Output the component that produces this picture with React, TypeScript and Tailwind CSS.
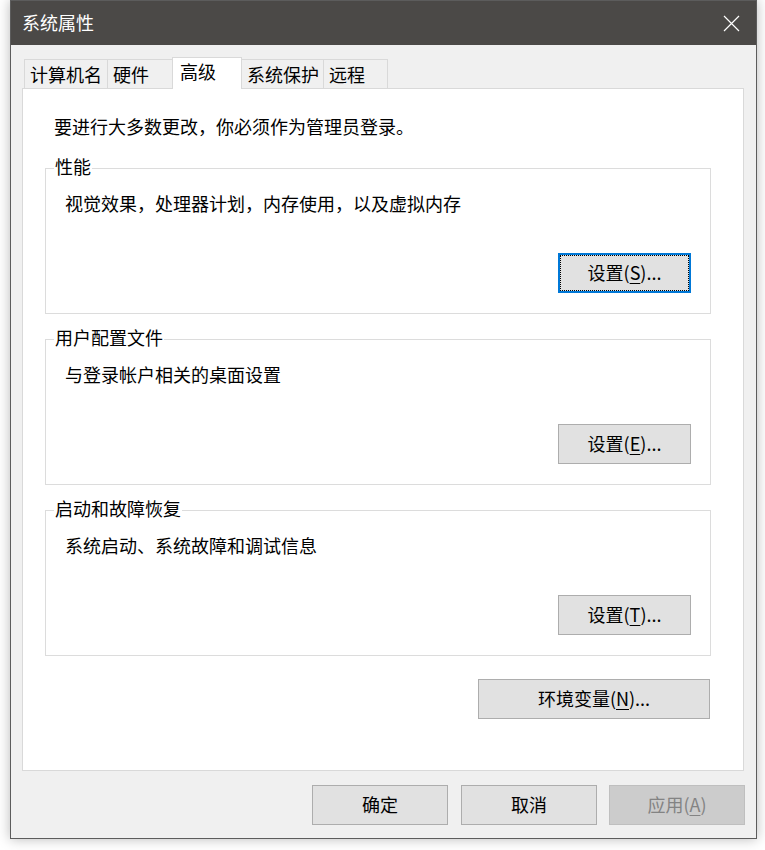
import React from "react";

const font = "font-['Noto_Sans_CJK_SC','Noto_Sans',sans-serif]";

interface TabItem {
  label: string;
  width: string;
  selected?: boolean;
  after?: boolean;
}

const tabs: TabItem[] = [
  { label: "计算机名", width: "w-[83px]" },
  { label: "硬件", width: "w-[65px]" },
  { label: "高级", width: "w-[70px]", selected: true },
  { label: "系统保护", width: "w-[82px]", after: true },
  { label: "远程", width: "w-[64px]", after: true },
];

function Mnemonic({ text, letter, rest }: { text: string; letter: string; rest: string }) {
  return (
    <span>
      {text}
      <span className="underline underline-offset-[3px] decoration-1">{letter}</span>
      {rest}
    </span>
  );
}

function WinButton({
  children,
  width = "w-[133px]",
  focused = false,
  disabled = false,
}: {
  children: React.ReactNode;
  width?: string;
  focused?: boolean;
  disabled?: boolean;
}) {
  if (focused) {
    return (
      <button className={`relative ${width} h-[40px] border-2 border-[#0078d7] bg-[#e1e1e1] pb-[2px] text-[18px] leading-[24px] text-black`}>
        <span className="absolute inset-0 border border-dotted border-black" />
        {children}
      </button>
    );
  }
  return (
    <button
      className={`${width} h-[40px] border pb-[2px] text-[18px] leading-[24px] ${
        disabled ? "border-[#bfbfbf] bg-[#cccccc] text-[#838383]" : "border-[#adadad] bg-[#e1e1e1] text-black"
      }`}
    >
      {children}
    </button>
  );
}

function GroupBox({
  title,
  desc,
  children,
  className = "",
}: {
  title: string;
  desc: string;
  children: React.ReactNode;
  className?: string;
}) {
  return (
    <div className={`relative ml-[22px] w-[666px] h-[146px] border border-[#dcdcdc] ${className}`}>
      <span className="absolute left-[8px] top-[-15px] bg-white px-[1px] text-[18px] leading-[24px]">{title}</span>
      <p className="pl-[19px] pt-[22px] text-[18px] leading-[24px]">{desc}</p>
      <div className="mt-[38px] flex justify-end pr-[19px]">{children}</div>
    </div>
  );
}

export default function App() {
  return (
    <div className={`relative w-[765px] h-[850px] overflow-hidden bg-white ${font} text-black`}>
      <div className="ml-[10px] flex h-[839px] w-[747px] flex-col border border-[#5c5c5c] bg-[#f0f0f0] shadow-[0_0_12px_rgba(0,0,0,0.28)]">
        {/* Title bar */}
        <div className="flex h-[44px] items-center justify-between bg-[#4b4947] pl-[11px] pr-[16px]">
          <span className="pb-[2px] text-[18px] leading-[24px] text-white">系统属性</span>
          <svg width="17" height="17" viewBox="0 0 17 17">
            <path d="M1 1 L16 16 M16 1 L1 16" stroke="#ffffff" strokeWidth="1.2" />
          </svg>
        </div>

        {/* Tabs */}
        <div className="ml-[13px] mt-[12px] flex h-[31px] items-end">
          {tabs.map((t) => (
            <div
              key={t.label}
              className={
                t.selected
                  ? `relative z-10 -mb-px h-[32px] ${t.width} border-x border-t border-[#d9d9d9] bg-white pl-[7px] pt-[1px] text-[18px] leading-[24px]`
                  : `h-[29px] ${t.width} ${t.after ? "border-r" : "border-l"} border-t border-[#d9d9d9] bg-[#f0f0f0] ${
                      t.after ? "pl-[5px]" : "pl-[5px]"
                    } pt-[2px] text-[18px] leading-[24px]`
              }
            >
              {t.label}
            </div>
          ))}
        </div>

        {/* Panel */}
        <div className="ml-[11px] h-[683px] w-[722px] border border-[#d9d9d9] bg-white">
          <p className="pl-[31px] pt-[25px] text-[18px] leading-[24px]">要进行大多数更改，你必须作为管理员登录。</p>

          <GroupBox title="性能" desc="视觉效果，处理器计划，内存使用，以及虚拟内存" className="mt-[30px]">
            <WinButton focused>
              <Mnemonic text="设置(" letter="S" rest=")..." />
            </WinButton>
          </GroupBox>

          <GroupBox title="用户配置文件" desc="与登录帐户相关的桌面设置" className="mt-[25px]">
            <WinButton>
              <Mnemonic text="设置(" letter="E" rest=")..." />
            </WinButton>
          </GroupBox>

          <GroupBox title="启动和故障恢复" desc="系统启动、系统故障和调试信息" className="mt-[25px]">
            <WinButton>
              <Mnemonic text="设置(" letter="T" rest=")..." />
            </WinButton>
          </GroupBox>

          <div className="mt-[23px] flex justify-end pr-[33px]">
            <WinButton width="w-[232px]">
              <Mnemonic text="环境变量(" letter="N" rest=")..." />
            </WinButton>
          </div>
        </div>

        {/* Dialog buttons */}
        <div className="mt-[14px] flex justify-end pr-[11px]">
          <WinButton width="w-[136px]">确定</WinButton>
          <div className="ml-[13px]">
            <WinButton width="w-[136px]">取消</WinButton>
          </div>
          <div className="ml-[12px]">
            <WinButton width="w-[136px]" disabled>
              <Mnemonic text="应用(" letter="A" rest=")" />
            </WinButton>
          </div>
        </div>
      </div>
    </div>
  );
}
